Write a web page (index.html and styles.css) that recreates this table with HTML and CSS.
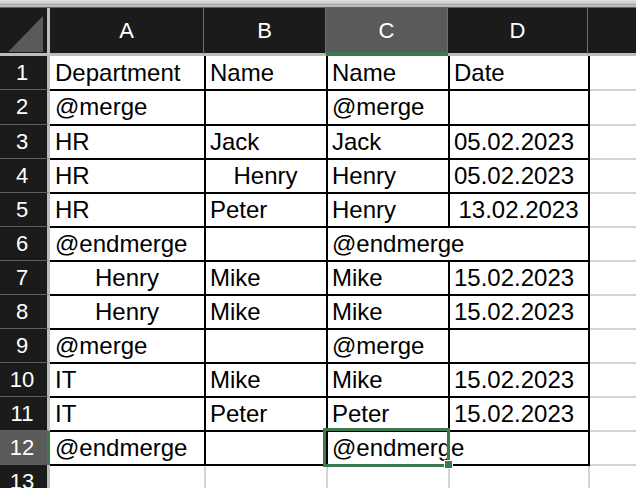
FILE: index.html
```html
<!DOCTYPE html>
<html>
<head>
<meta charset="utf-8">
<link rel="stylesheet" href="styles.css">
</head>
<body>
<div class="topstrip"></div>
<div class="sheet">
  <div class="corner"><svg width="47" height="45" viewBox="0 0 47 45"><polygon points="8,44 43,44 43,8" fill="#5a5a5a"/></svg></div>
  <div class="colhead">A</div>
  <div class="colhead">B</div>
  <div class="colhead sel">C</div>
  <div class="colhead">D</div>
  <div class="colhead last"></div>

  <div class="rowhead">1</div>
  <div class="c">Department</div><div class="c">Name</div><div class="c">Name</div><div class="c">Date</div><div class="e"></div>

  <div class="rowhead">2</div>
  <div class="c">@merge</div><div class="c"></div><div class="c">@merge</div><div class="c"></div><div class="e"></div>

  <div class="rowhead">3</div>
  <div class="c">HR</div><div class="c">Jack</div><div class="c">Jack</div><div class="c">05.02.2023</div><div class="e"></div>

  <div class="rowhead">4</div>
  <div class="c">HR</div><div class="c center">Henry</div><div class="c">Henry</div><div class="c">05.02.2023</div><div class="e"></div>

  <div class="rowhead">5</div>
  <div class="c">HR</div><div class="c">Peter</div><div class="c">Henry</div><div class="c center">13.02.2023</div><div class="e"></div>

  <div class="rowhead">6</div>
  <div class="c">@endmerge</div><div class="c"></div><div class="c span2">@endmerge</div><div class="e"></div>

  <div class="rowhead">7</div>
  <div class="c center">Henry</div><div class="c">Mike</div><div class="c">Mike</div><div class="c">15.02.2023</div><div class="e"></div>

  <div class="rowhead">8</div>
  <div class="c center">Henry</div><div class="c">Mike</div><div class="c">Mike</div><div class="c">15.02.2023</div><div class="e"></div>

  <div class="rowhead">9</div>
  <div class="c">@merge</div><div class="c"></div><div class="c">@merge</div><div class="c"></div><div class="e"></div>

  <div class="rowhead">10</div>
  <div class="c">IT</div><div class="c">Mike</div><div class="c">Mike</div><div class="c">15.02.2023</div><div class="e"></div>

  <div class="rowhead">11</div>
  <div class="c">IT</div><div class="c">Peter</div><div class="c">Peter</div><div class="c">15.02.2023</div><div class="e"></div>

  <div class="rowhead sel">12</div>
  <div class="c">@endmerge</div><div class="c"></div><div class="c span2 active">@endmerge<span class="selbox"></span><span class="handle"></span></div><div class="e"></div>

  <div class="rowhead">13</div>
  <div class="g"></div><div class="g"></div><div class="g"></div><div class="g"></div><div class="g last"></div>
</div>
</body>
</html>
```
FILE: styles.css
```css
html, body {
  margin: 0;
  padding: 0;
  background: #ffffff;
  width: 636px;
  height: 488px;
  overflow: hidden;
}

.topstrip {
  height: 8px;
  background: linear-gradient(#dcdcdc 0px, #d0d0d0 3px, #9a9a9a 5px, #e4e4e4 6px, #8a8a8a 7px, #3a3a3a 8px);
}

.sheet {
  display: grid;
  grid-template-columns: 50px 155px 122px 122px 140px 47px;
  grid-template-rows: 48px 34px 35px repeat(10, 34px) 30px;
  font-family: "Liberation Sans", Arial, sans-serif;
}

.corner {
  background: #1b1b1b;
  border-right: 3px solid #bdbdbd;
  border-bottom: 3px solid #bdbdbd;
  box-sizing: border-box;
  overflow: hidden;
}
.corner svg { display: block; }

.colhead {
  background: #1b1b1b;
  color: #ffffff;
  font-size: 22px;
  text-align: center;
  line-height: 46px;
  border-right: 2px solid #6e6e6e;
  border-bottom: 3px solid #bdbdbd;
  box-sizing: border-box;
  margin-left: -1px;
}
.colhead:nth-child(2) { margin-left: 0; }
.colhead.sel {
  background: #5a5a5a;
  border-bottom: 4px solid #3b7a4e;
}
.colhead.last { border-right: none; }

.rowhead {
  background: #1b1b1b;
  color: #ffffff;
  font-size: 22px;
  text-align: center;
  line-height: 34px;
  padding-right: 3px;
  border-right: 3px solid #bdbdbd;
  border-bottom: 1px solid #5e5e5e;
  box-sizing: border-box;
  overflow: hidden;
}
.rowhead.sel {
  background: #5a5a5a;
  border-right: 3px solid #3b7a4e;
}

.c {
  position: relative;
  box-sizing: border-box;
  border-right: 2px solid #000;
  border-bottom: 2px solid #000;
  font-size: 24px;
  line-height: 33px;
  padding-left: 5px;
  color: #000;
  white-space: nowrap;
  margin-right: -1px;
  margin-bottom: -1px;
}
.c.center { text-align: center; padding-left: 0; }
.c.span2 { grid-column: span 2; }
.active { overflow: visible; }

.selbox {
  position: absolute;
  left: -4px;
  top: -3px;
  width: 127px;
  height: 39px;
  border: 3px solid #3b7a4e;
  box-sizing: border-box;
}
.handle {
  position: absolute;
  left: 117px;
  top: 29px;
  width: 9px;
  height: 9px;
  background: #3b7a4e;
  border: 1px solid #ffffff;
  box-sizing: border-box;
}

.e {
  box-sizing: border-box;
  border-bottom: 2px solid #d4d4d4;
  margin-bottom: -1px;
}
.g {
  box-sizing: border-box;
  border-right: 2px solid #d4d4d4;
  margin-right: -1px;
}
.g.last { border-right: none; }
```
